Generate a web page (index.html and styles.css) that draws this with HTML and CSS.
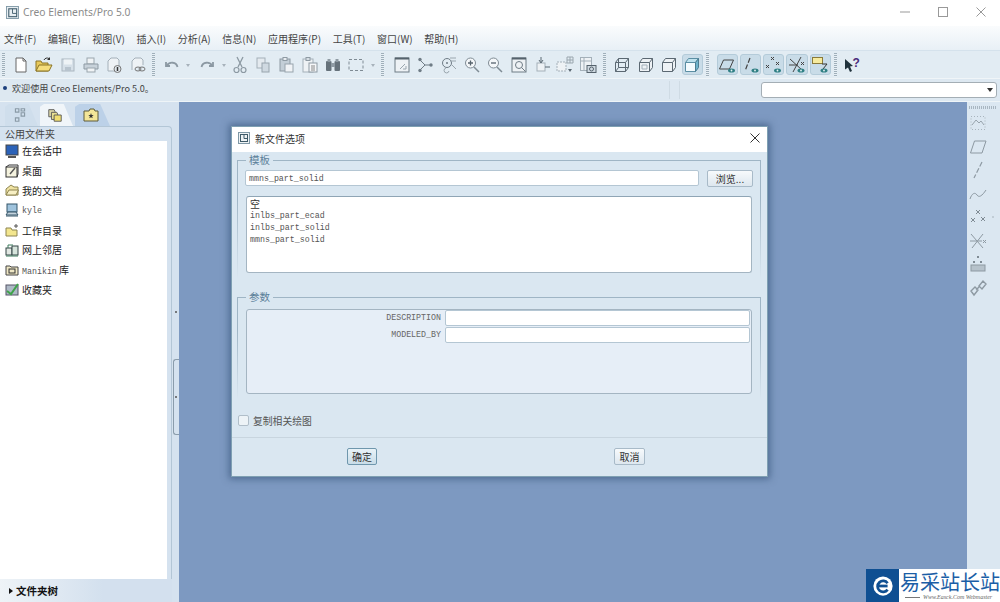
FILE: index.html
```html
<!DOCTYPE html>
<html lang="zh-CN">
<head>
<meta charset="utf-8">
<title>Creo Elements/Pro 5.0</title>
<link rel="stylesheet" href="styles.css">
</head>
<body>
<div class="app">
  <header class="titlebar">
    <svg class="app-icon" viewBox="0 0 14 14"><rect x=".5" y=".5" width="13" height="13" fill="#e8eef2" stroke="#7f98a6"/><rect x="3" y="3" width="8.5" height="8.5" fill="none" stroke="#44606f" stroke-width="1.2"/><path d="M7 3v5h4.500" fill="none" stroke="#44606f"/></svg>
    <span class="app-title">Creo Elements/Pro 5.0</span>
    <div class="win-controls">
      <svg viewBox="0 0 10 10"><path d="M0 5h10" stroke="#999" fill="none"/></svg>
      <svg viewBox="0 0 10 10"><rect x=".5" y=".5" width="9" height="9" stroke="#999" fill="none"/></svg>
      <svg viewBox="0 0 10 10"><path d="M.5.500l9 9M9.500.500l-9 9" stroke="#999" fill="none"/></svg>
    </div>
  </header>

  <nav class="menubar">
    <span>文件(F)</span><span>编辑(E)</span><span>视图(V)</span><span>插入(I)</span><span>分析(A)</span><span>信息(N)</span><span>应用程序(P)</span><span>工具(T)</span><span>窗口(W)</span><span>帮助(H)</span>
  </nav>

  <div class="toolbar">
    <i class="grip grip-first"></i>
    <b class="tb"><svg viewBox="0 0 18 18"><path d="M4 2h7l3 3v11H4z" fill="#fff" stroke="#666"/><path d="M11 2v3h3" fill="none" stroke="#666"/></svg></b>
    <b class="tb"><svg viewBox="0 0 18 18"><path d="M1 15V5h5l1 2h6v8z" fill="#e8c95a" stroke="#8a7426"/><path d="M1 15l3-6h13l-3 6z" fill="#f5dd7c" stroke="#8a7426"/><path d="M9 4c1-2 3-2.500 5-1.500" fill="none" stroke="#333"/><path d="M15 1v3h-3z" fill="#333"/></svg></b>
    <b class="tb"><svg viewBox="0 0 18 18"><rect x="3" y="3" width="12" height="12" fill="#d6e0e8" stroke="#aab6c0"/><rect x="5" y="3.500" width="8" height="5" fill="#eef3f6"/><rect x="6" y="11" width="6" height="4" fill="#b8c4ce"/></svg></b>
    <b class="tb"><svg viewBox="0 0 18 18"><rect x="5" y="2" width="7" height="6" fill="#f0f3f5" stroke="#9aa6ae"/><path d="M2 8h14v5H2z" fill="#c8d2da" stroke="#8e9aa3"/><rect x="5" y="12" width="8" height="4" fill="#f0f3f5" stroke="#9aa6ae"/></svg></b>
    <b class="tb"><svg viewBox="0 0 18 18"><path d="M3 15V5l3-3h6l2 2v11z" fill="#eef2f5" stroke="#a4b0b9"/><circle cx="12.500" cy="13" r="3.500" fill="#dfe6eb" stroke="#777"/><path d="M12.500 11v4" stroke="#333" stroke-width="1.500"/></svg></b>
    <b class="tb"><svg viewBox="0 0 18 18"><path d="M3 14V5l3-3h6l2 2v5" fill="#eef2f5" stroke="#a4b0b9"/><ellipse cx="9" cy="13" rx="3" ry="2" fill="none" stroke="#777"/><ellipse cx="13" cy="13" rx="3" ry="2" fill="none" stroke="#777"/></svg></b>
    <i class="grip grip-a"></i>
    <b class="tb"><svg viewBox="0 0 18 18"><path d="M3 6v4h4" fill="none" stroke="#8c99a3" stroke-width="1.800"/><path d="M3.500 10c3-5 10-4 11 1" fill="none" stroke="#8c99a3" stroke-width="1.800"/></svg></b>
    <b class="dd"></b>
    <b class="tb"><svg viewBox="0 0 18 18"><path d="M15 6v4h-4" fill="none" stroke="#8c99a3" stroke-width="1.800"/><path d="M14.500 10c-3-5-10-4-11 1" fill="none" stroke="#8c99a3" stroke-width="1.800"/></svg></b>
    <b class="dd dd-narrow"></b>
    <b class="tb"><svg viewBox="0 0 18 18"><path d="M6 1l5 10M12 1L7 11" stroke="#8c99a3" stroke-width="1.300" fill="none"/><circle cx="5.500" cy="14" r="2.500" fill="none" stroke="#8c99a3" stroke-width="1.200"/><circle cx="12.500" cy="14" r="2.500" fill="none" stroke="#8c99a3" stroke-width="1.200"/></svg></b>
    <b class="tb"><svg viewBox="0 0 18 18"><rect x="3" y="2" width="8" height="10" fill="#e4eaef" stroke="#a4b0b9"/><rect x="8" y="7" width="7" height="9" fill="#cfd9e1" stroke="#98a4ad"/></svg></b>
    <b class="tb"><svg viewBox="0 0 18 18"><rect x="3" y="3" width="10" height="12" fill="#c3ced7" stroke="#8e9aa3"/><rect x="6" y="1.500" width="4" height="3" fill="#e8edf1" stroke="#8e9aa3"/><rect x="8" y="8" width="8" height="8" fill="#f0f3f6" stroke="#98a4ad"/></svg></b>
    <b class="tb"><svg viewBox="0 0 18 18"><rect x="2" y="3" width="10" height="13" fill="#eef2f5" stroke="#a4b0b9"/><rect x="5" y="1.500" width="4" height="3" fill="#d6dee4" stroke="#8e9aa3"/><rect x="8" y="7" width="8" height="9" fill="#f5f7f9" stroke="#8e9aa3"/><path d="M10 10h4M10 12h4M10 14h4" stroke="#888"/></svg></b>
    <b class="tb"><svg viewBox="0 0 18 18"><rect x="2" y="5" width="5.500" height="10" rx="1" fill="#66727b"/><rect x="10.500" y="5" width="5.500" height="10" rx="1" fill="#66727b"/><rect x="7" y="7" width="4" height="4" fill="#8f9ba4"/><rect x="3.500" y="3" width="3" height="3" fill="#8f9ba4"/><rect x="11.500" y="3" width="3" height="3" fill="#8f9ba4"/></svg></b>
    <b class="tb"><svg viewBox="0 0 18 18"><rect x="2" y="3.500" width="14" height="11" fill="none" stroke="#7f8b94" stroke-dasharray="3 2"/></svg></b>
    <b class="dd"></b>
    <i class="grip grip-b"></i>
    <b class="tb"><svg viewBox="0 0 18 18"><rect x="2" y="2" width="14" height="14" fill="#eef2f5" stroke="#6f7c86"/><path d="M2 2.500h14" stroke="#55626c" stroke-width="2"/><path d="M7 13l5-5M10 13h3v-3" fill="none" stroke="#9aa6ae"/></svg></b>
    <b class="tb"><svg viewBox="0 0 18 18"><path d="M4 4l5 5H16M9 9l-5 5" fill="none" stroke="#6f7c86"/><circle cx="4" cy="3.500" r="1.700" fill="#6f7c86"/><circle cx="4" cy="14.500" r="1.700" fill="#6f7c86"/><circle cx="15" cy="9" r="1.700" fill="#6f7c86"/></svg></b>
    <b class="tb"><svg viewBox="0 0 18 18"><circle cx="7" cy="7" r="4.500" fill="none" stroke="#6f7c86"/><circle cx="7" cy="7" r="1" fill="#6f7c86"/><path d="M10 2h6M10 5h6M12 9l4 4M6 12a2.500 2.500 0 1 0 3 3" fill="none" stroke="#9aa6ae"/></svg></b>
    <b class="tb"><svg viewBox="0 0 18 18"><circle cx="7.500" cy="7" r="5" fill="#f4f7f9" stroke="#7f8b94"/><path d="M5 7h5M7.500 4.500v5" stroke="#55626c" stroke-width="1.300"/><path d="M11 11l5 5" stroke="#7f8b94" stroke-width="1.500"/></svg></b>
    <b class="tb"><svg viewBox="0 0 18 18"><circle cx="7.500" cy="7" r="5" fill="#f4f7f9" stroke="#7f8b94"/><path d="M5 7h5" stroke="#55626c" stroke-width="1.300"/><path d="M11 11l5 5" stroke="#7f8b94" stroke-width="1.500"/></svg></b>
    <b class="tb"><svg viewBox="0 0 18 18"><rect x="2" y="2" width="14" height="14" fill="#eef2f5" stroke="#6f7c86"/><path d="M2 2.500h14" stroke="#55626c" stroke-width="2"/><circle cx="9" cy="9" r="3.500" fill="none" stroke="#6f7c86"/><path d="M11.500 11.500l4 4" stroke="#6f7c86"/></svg></b>
    <b class="tb"><svg viewBox="0 0 18 18"><rect x="4" y="7" width="8" height="8" fill="#eef2f5" stroke="#a4b0b9"/><path d="M8 1v5M6 4l2 3 2-3M12 11h5" stroke="#5b6872" fill="none"/></svg></b>
    <b class="tb"><svg viewBox="0 0 18 18"><rect x="1" y="6" width="9" height="9" fill="#eef2f5" stroke="#a4b0b9" stroke-dasharray="2 1"/><path d="M11 1h6v6h-6zM14 1v6M11 4h6" fill="none" stroke="#9aa6ae"/><path d="M12 13l2 3 2-3z" fill="#5b6872"/></svg></b>
    <b class="tb"><svg viewBox="0 0 18 18"><rect x="1.500" y="1.500" width="11" height="13" fill="#eef2f5" stroke="#a4b0b9"/><path d="M1.500 5h11M5 1.500V14" stroke="#a4b0b9"/><rect x="8" y="9.500" width="9" height="7" fill="#cfd9e1" stroke="#55626c"/><circle cx="12.500" cy="13" r="2" fill="none" stroke="#55626c"/></svg></b>
    <i class="grip grip-c"></i>
    <b class="tb"><svg viewBox="0 0 18 18"><path d="M2.500 6.500h10v9h-10zM2.500 6.500l3-4h10v9l-3 4M12.500 6.500l3-4M5.500 2.500v9h10M5.500 11.500l-3 4" fill="none" stroke="#5b6872"/></svg></b>
    <b class="tb"><svg viewBox="0 0 18 18"><path d="M2.500 6.500h10v9h-10zM2.500 6.500l3-4h10v9l-3 4M12.500 6.500l3-4" fill="#eef2f5" stroke="#5b6872"/><path d="M5 9h5v4H5z" fill="none" stroke="#a4b0b9"/></svg></b>
    <b class="tb"><svg viewBox="0 0 18 18"><path d="M2.500 6.500h10v9h-10zM2.500 6.500l3-4h10v9l-3 4M12.500 6.500l3-4" fill="#eef2f5" stroke="#5b6872"/></svg></b>
    <b class="tb tb-on"><svg viewBox="0 0 18 18"><path d="M2.500 6.500h10v9h-10z" fill="#f4fbfe" stroke="#5b8ea3"/><path d="M2.500 6.500l3-4h10l-3 4z" fill="#bfe2ee" stroke="#5b8ea3"/><path d="M12.500 6.500l3-4v9l-3 4z" fill="#6fb3cb" stroke="#4c7e92"/></svg></b>
    <i class="grip grip-d"></i>
    <b class="tb tb-on"><svg viewBox="0 0 18 18"><path d="M1.500 13l4-9h10l-4 9z" fill="none" stroke="#444"/><ellipse cx="13.500" cy="14.500" rx="3.500" ry="2" fill="#2f7f84"/><circle cx="13.500" cy="14.500" r=".9" fill="#e6f2f4"/></svg></b>
    <b class="tb tb-on"><svg viewBox="0 0 18 18"><path d="M8 2L3 15" fill="none" stroke="#444" stroke-width="1.200" stroke-dasharray="5 2"/><ellipse cx="13" cy="14.500" rx="3.500" ry="2" fill="#2f7f84"/><circle cx="13" cy="14.500" r=".9" fill="#e6f2f4"/></svg></b>
    <b class="tb tb-on"><svg viewBox="0 0 18 18"><path d="M6 1l3 3M9 1L6 4M11 6l3 3M14 6l-3 3M1 9l3 3M4 9l-3 3" fill="none" stroke="#444"/><ellipse cx="12.500" cy="14.500" rx="3.500" ry="2" fill="#2f7f84"/><circle cx="12.500" cy="14.500" r=".9" fill="#e6f2f4"/></svg></b>
    <b class="tb tb-on"><svg viewBox="0 0 18 18"><path d="M2 3l12 11M13 1L5 16M1 9h9" fill="none" stroke="#444"/><path d="M13 6l3 3M16 6l-3 3" stroke="#444"/><ellipse cx="13" cy="14.500" rx="3.500" ry="2" fill="#2f7f84"/><circle cx="13" cy="14.500" r=".9" fill="#e6f2f4"/></svg></b>
    <b class="tb tb-on"><svg viewBox="0 0 18 18"><rect x="1.500" y="1.500" width="10" height="6" fill="#f6eb9e" stroke="#8a7a3a"/><path d="M11 8h5l-4 5" fill="none" stroke="#333"/><ellipse cx="13" cy="14.500" rx="3.500" ry="2" fill="#2f7f84"/><circle cx="13" cy="14.500" r=".9" fill="#e6f2f4"/></svg></b>
    <i class="grip grip-e"></i>
    <b class="tb"><svg viewBox="0 0 18 18"><path d="M1 3l8 7-3 .5L8 15l-2 1-2-4.500-3 2z" fill="#20323c"/><text class="help-mark" x="8.500" y="11">?</text></svg></b>
  </div>

  <div class="statusbar">
    <i class="status-dot"></i>
    <span class="status-text">欢迎使用 Creo Elements/Pro 5.0。</span>
    <i class="status-rule status-rule-a"></i>
    <i class="status-rule"></i>
    <div class="combo"><i class="combo-arrow"></i></div>
  </div>

  <main class="workspace">
    <aside class="sidebar">
      <div class="side-main">
        <div class="tabs">
          <div class="tab tab-a"><svg viewBox="0 0 12 14"><path d="M2 1.500h3v3H2zM7 5h3v3H7zM2 9.500h3v3H2zM7 1.500h3v2H7z" fill="none" stroke="#8a9aa6"/></svg></div>
          <div class="tab tab-b"><svg viewBox="0 0 18 18"><path d="M2 3h6l1 2v6H2z" fill="#ddd8a8" stroke="#555"/><path d="M5 6h6l1 2v6H5z" fill="#e8df90" stroke="#555"/><path d="M8 9h8v7H8z" fill="#f0de70" stroke="#555"/></svg></div>
          <div class="tab tab-c"><svg viewBox="0 0 16 14"><path d="M1 3h5l1-2h4l1 2h3v10H1z" fill="#f3e698" stroke="#5d5a3a"/><path d="M8 5l.7 2 2 .1-1.600 1.200.6 2L8 9.200l-1.700 1.100.6-2L5.300 7.100l2-.1z" fill="#333"/></svg></div>
        </div>
        <section class="panel">
          <h2 class="panel-head">公用文件夹</h2>
          <ul class="folders">
            <li><svg viewBox="0 0 14 14"><rect x="1" y="1" width="12" height="10" fill="#2b62b8" stroke="#444"/><path d="M3 13h8" stroke="#555" stroke-width="2"/></svg>在会话中</li>
            <li><svg viewBox="0 0 14 14"><rect x="1" y="3" width="11" height="10" fill="#f5f3df" stroke="#333"/><path d="M1 3l3-2h9v9l-1 3" fill="none" stroke="#333"/><path d="M5 10l5-6" stroke="#555" stroke-width="1.400"/></svg>桌面</li>
            <li><svg viewBox="0 0 14 14"><path d="M1 12V6l5-4 3 2h4v8z" fill="#efe2a2" stroke="#8d8450"/><path d="M1 12l3-5h9.500L11 12z" fill="#f7efc4" stroke="#8d8450"/></svg>我的文档</li>
            <li><svg viewBox="0 0 14 14"><rect x="2" y="1" width="10" height="8" fill="#9fc3dd" stroke="#35566b"/><path d="M1 12l2-3h8l2 3z" fill="#c4d3dd" stroke="#35566b"/><path d="M1 13h12" stroke="#35566b"/></svg><span class="mono">kyle</span></li>
            <li><svg viewBox="0 0 14 14"><path d="M1 13V5h5l1 2h5v6z" fill="#f3e68e" stroke="#8d8450"/><path d="M11 1v4M9 3h4" stroke="#555"/></svg>工作目录</li>
            <li><svg viewBox="0 0 14 14"><rect x="1" y="5" width="6" height="7" fill="#e2e8e3" stroke="#344"/><rect x="7" y="3" width="6" height="9" fill="#d6e4dc" stroke="#344"/><path d="M3 5V2h5M1 13h12" fill="none" stroke="#3c7a5d"/></svg>网上邻居</li>
            <li><svg viewBox="0 0 14 14"><path d="M1 12V3h4l1 1h7v8z" fill="#efe7c5" stroke="#444"/><rect x="4" y="6" width="6" height="4" fill="none" stroke="#333"/></svg><span><span class="mono">Manikin</span> 库</span></li>
            <li><svg viewBox="0 0 14 14"><rect x="1" y="3" width="12" height="10" fill="#aeb9c6" stroke="#556"/><path d="M2 9l4 3 7-10" fill="none" stroke="#3fa34a" stroke-width="2"/></svg>收藏夹</li>
          </ul>
        </section>
        <footer class="side-foot"><i class="foot-arrow"></i><strong>文件夹树</strong></footer>
      </div>
      <div class="splitter"><i class="split-dot split-dot-top"></i><div class="split-handle"><i class="split-dot"></i></div></div>
    </aside>

    <div class="canvas">
      <section class="dialog">
        <header class="dlg-title">
          <svg class="dlg-icon" viewBox="0 0 12 12"><rect x=".5" y=".5" width="11" height="11" fill="#eef2f4" stroke="#7f98a6"/><rect x="2.500" y="2.500" width="7" height="7" fill="none" stroke="#3e5a68"/><path d="M6 2.500v4h3.500" fill="none" stroke="#3e5a68"/></svg>
          <span class="dlg-name">新文件选项</span>
          <svg class="dlg-close" viewBox="0 0 10 10"><path d="M.5.500l9 9M9.500.500l-9 9" stroke="#333" fill="none"/></svg>
        </header>
        <div class="dlg-body">
          <fieldset class="group">
            <legend>模板</legend>
            <div class="file-row">
              <div class="field file-field mono">mmns_part_solid</div>
              <button class="btn btn-browse" type="button">浏览...</button>
            </div>
            <div class="listbox">
              <div class="cjk-item">空</div>
              <div class="mono">inlbs_part_ecad</div>
              <div class="mono">inlbs_part_solid</div>
              <div class="mono">mmns_part_solid</div>
            </div>
          </fieldset>
          <fieldset class="group group-params">
            <legend>参数</legend>
            <div class="params">
              <label class="mono">DESCRIPTION</label><div class="field"></div>
              <label class="mono">MODELED_BY</label><div class="field"></div>
            </div>
          </fieldset>
          <div class="copy-row"><i class="check"></i><span>复制相关绘图</span></div>
        </div>
        <footer class="dlg-foot">
          <button class="btn btn-ok" type="button">确定</button>
          <button class="btn btn-cancel" type="button">取消</button>
        </footer>
      </section>
      <aside class="watermark">
        <div class="wm-logo"><svg viewBox="0 0 24 24"><circle cx="12" cy="12" r="10.500" fill="#fff"/><path d="M17 9a6 6 0 1 0 0 7" fill="none" stroke="#0f4f92" stroke-width="3"/><path d="M6 12h11" stroke="#0f4f92" stroke-width="3"/></svg></div>
        <div class="wm-text"><div class="wm-name">易采站长站</div><div class="wm-sub"><i class="wm-rule"></i>Www.Easck.Com Webmaster</div></div>
      </aside>
    </div>

    <aside class="rightbar">
      <i class="right-grip"></i>
      <svg viewBox="0 0 18 18"><path d="M2 2.500h14v13H2z" fill="none" stroke="#a8b4bd" stroke-dasharray="1 2"/><path d="M3 11l4-5 3 3 2-2 3 4" fill="none" stroke="#98a4ad"/></svg>
      <svg viewBox="0 0 18 18"><path d="M1.500 15l4-12H17l-4 12z" fill="none" stroke="#8d99a2"/></svg>
      <svg viewBox="0 0 18 18"><path d="M13 1L5 17" fill="none" stroke="#8d99a2" stroke-width="1.200" stroke-dasharray="5 2"/></svg>
      <svg viewBox="0 0 18 18"><path d="M1 14c2-6 5-7 7-4s5 1 9-5" fill="none" stroke="#8d99a2"/></svg>
      <svg class="right-wide" viewBox="0 0 27 18"><path d="M7 2l4 4M11 2L7 6M2 10l4 4M6 10l-4 4M12 9l4 4M16 9l-4 4" stroke="#7f8b94" fill="none"/><circle cx="24" cy="9" r="1" fill="#b8c4cd"/></svg>
      <svg viewBox="0 0 18 18"><path d="M2 2l12 14M14 2L3 16M1 9h12M14 8l3 3M17 8l-3 3" stroke="#8d99a2" fill="none"/></svg>
      <svg viewBox="0 0 18 18"><path d="M8 1l2 2M10 1L8 3M4 6l2 2M6 6L4 8M11 6l2 2M13 6l-2 2" stroke="#7f8b94" fill="none"/><rect x="2" y="10" width="14" height="6" fill="#b6c2cb" stroke="#8d99a2"/></svg>
      <svg viewBox="0 0 18 18"><path d="M2 12l4-4 3 3-4 5zM10 7l4-5 3 3-4 5zM7 11l4-4" fill="none" stroke="#8d99a2" stroke-width="1.400"/></svg>
    </aside>
  </main>
</div>
</body>
</html>
```
FILE: styles.css
```css
* { box-sizing: border-box; }
html, body { margin: 0; padding: 0; }
body { font-family: "Noto Sans CJK SC", "Noto Sans", sans-serif; color: #333; background: #7d99c1; }
i, b { display: block; font-style: normal; font-weight: normal; }
.mono { font-family: "Liberation Mono", "Noto Sans CJK SC", monospace; }
.app { width: 1000px; height: 602px; display: flex; flex-direction: column; overflow: hidden; }

.titlebar { height: 26px; background: #fff; display: flex; align-items: center; padding: 0 0 2px 6px; }
.app-icon { width: 13px; height: 13px; }
.app-title { margin-left: 4px; font-family: "Noto Sans", sans-serif; font-size: 10.3px; color: #8b8b8b; white-space: nowrap; }
.win-controls { margin-left: auto; display: flex; gap: 28px; padding-right: 14px; }
.win-controls svg { width: 10px; height: 10px; }

.menubar { height: 24px; display: flex; gap: 11.67px; align-items: center; padding-left: 4px; font-size: 10px; color: #444; background: linear-gradient(#fafcfd, #e8f0f6); }
.menubar span { white-space: nowrap; }

.toolbar { height: 29px; display: flex; align-items: center; padding-left: 2px; background: #e2ecf3; border-top: 1px solid #d5e2ec; border-bottom: 1px solid #f0f5f8; }
.tb { flex: none; width: 23.3px; height: 24px; display: flex; align-items: center; justify-content: center; }
.tb svg { width: 18px; height: 18px; }
.tb-on { width: 21.3px; height: 21px; margin: 0 1px; background: #c9dce8; border: 1px solid #b4cbd9; border-radius: 3px; }
.dd { flex: none; width: 12px; height: 24px; position: relative; }
.dd::after { content: ""; position: absolute; left: 3px; top: 11px; border: 2px solid transparent; border-top: 3px solid #a7b2bb; border-bottom: 0; }
.dd-narrow { width: 9.4px; }
.grip { flex: none; width: 3px; height: 24px; background: repeating-linear-gradient(#9fafba 0 1px, #e8f0f5 1px 2px); }
.grip-first { margin-right: 4.4px; }
.grip-a { margin: 0 5.5px 0 2.5px; }
.grip-b { margin: 0 6px 0 1.500px; }
.grip-c { margin: 0 5px 0 2.500px; }
.grip-d { margin: 0 6.800px 0 2px; }
.grip-e { margin: 0 4.400px 0 2px; }
.help-mark { font: 700 12px "Liberation Sans", sans-serif; fill: #4a2a7a; }

.statusbar { height: 23px; display: flex; align-items: center; padding: 0 0 4px 3px; background: #dde8f1; border-bottom: 1px solid #eef4f7; }
.status-dot { width: 4px; height: 4px; border-radius: 50%; background: #1c3f7d; }
.status-text { margin-left: 5px; font-size: 9.1px; color: #444; white-space: nowrap; }
.status-rule { width: 1px; height: 18px; margin-left: 9px; margin-top: 4px; background: #cfdbe4; }
.status-rule-a { margin-left: 515px; }
.combo { margin-left: 81px; margin-top: 4px; width: 236px; height: 16px; background: #fff; border: 1px solid #a4aeb5; border-radius: 3px; position: relative; }
.combo-arrow { position: absolute; right: 3px; top: 5px; border: 3px solid transparent; border-top: 4px solid #333; border-bottom: 0; }

.workspace { height: 500px; display: flex; }

.sidebar { width: 179px; flex: none; display: flex; background: #d5e2ef; }
.side-main { width: 172px; display: flex; flex-direction: column; }
.tabs { height: 24px; display: flex; align-items: flex-end; padding-left: 5px; gap: 2px; }
.tab { width: 33px; height: 22px; display: flex; align-items: center; justify-content: center; padding-right: 4px; clip-path: polygon(0 100%, 0 12%, 12% 0, 72% 0, 100% 100%); }
.tab svg { width: 16px; height: 16px; }
.tab-a { background: #cfdeec; }
.tab-b { background: #f0f5f9; }
.tab-c { background: #bcd1e8; width: 35px; }
.panel { flex: 1; min-height: 0; display: flex; flex-direction: column; border-top: 1px solid #b3c6d6; border-right: 1px solid #b3c6d6; border-top-right-radius: 4px; padding-right: 4px; }
.panel-head { margin: 0; height: 14px; line-height: 14px; padding-left: 5px; font-size: 10px; font-weight: 400; color: #444; }
.folders { flex: 1; margin: 0; padding: 0; list-style: none; background: #fff; }
.folders li { height: 19.8px; display: flex; align-items: center; gap: 3px; padding-left: 6px; font-size: 10px; color: #222; white-space: nowrap; }
.folders svg { width: 14px; height: 14px; flex: none; margin-left: -1px; }
.folders .mono { font-size: 8.300px; color: #555; }
.side-foot { height: 23px; display: flex; align-items: center; padding-left: 9px; background: linear-gradient(90deg, #eef3f7, #d3e0ee 60%); font-size: 10.500px; color: #111; }
.foot-arrow { border: 3px solid transparent; border-left: 4px solid #111; border-right: 0; margin-right: 3px; }
.side-foot strong { font-weight: 700; }
.splitter { width: 7px; padding-top: 209px; display: flex; flex-direction: column; align-items: center; }
.split-dot { width: 2px; height: 2px; background: #555; border-radius: 50%; }
.split-handle { margin-top: 46px; width: 6px; height: 76px; border: 1px solid #8a9cab; border-right: 0; border-radius: 3px 0 0 3px; display: flex; align-items: center; justify-content: center; }

.canvas { flex: 1; min-width: 0; position: relative; background: #7d99c1; }
.dialog { position: absolute; left: 52px; top: 24px; width: 537px; height: 351px; display: flex; flex-direction: column; background: #dae7f1; border: 1px solid #7fa0b3; box-shadow: 0 0 7px 2px rgba(40, 70, 105, .55); }
.dlg-title { height: 25px; flex: none; background: #fff; display: flex; align-items: center; padding: 0 7px 3px 6px; }
.dlg-icon { width: 12px; height: 12px; }
.dlg-name { margin-left: 5px; font-size: 10px; color: #333; }
.dlg-close { margin-left: auto; width: 10px; height: 10px; }
.dlg-body { flex: none; padding-top: 1px; }
.group { margin: 0 6px 0 5px; padding: 3px 7px 12px; min-width: 0; border: 1px solid #9fb5c5; border-image: linear-gradient(#9fb5c5 30%, #dae7f1 95%) 1; }
.group legend { margin-left: 1px; padding: 0 3px; height: 14px; line-height: 14px; font-size: 10.500px; color: #5a8099; background: #dae7f1; }
.group-params { margin-top: 4px; padding: 5px 7px 10px; }
.file-row { display: flex; gap: 8px; }
.field { height: 16px; background: #fff; border: 1px solid #b4c6d3; border-radius: 2px; font-size: 8.300px; line-height: 15px; padding-left: 3px; color: #555; }
.file-field { width: 454px; flex: none; }
.btn { font: 10px "Noto Sans CJK SC", sans-serif; color: #333; padding: 0; background: linear-gradient(#f7fafc, #dde7ef); border: 1px solid #a8bac8; border-radius: 2px; height: 17px; line-height: 14px; }
.btn-browse { width: 46px; flex: none; }
.listbox { margin: 9px 1px 0; height: 77px; background: #fff; border: 1px solid #a4b5c2; border-top-color: #8fa5b5; border-radius: 3px; padding: 1px 3px; font-size: 8.300px; line-height: 12px; color: #555; }
.cjk-item { font-size: 10px; color: #333; }
.params { margin: 0 1px; height: 85px; display: grid; grid-template-columns: 1fr 305px; grid-auto-rows: 16px; gap: 1px 4px; align-content: start; background: #e6eef7; border: 1px solid #a4b5c2; border-radius: 3px; padding-right: 1px; }
.params label { text-align: right; font-size: 8.300px; line-height: 16px; color: #666; }
.copy-row { margin-top: 10px; padding-left: 6px; height: 11px; display: flex; align-items: center; gap: 4px; font-size: 9.800px; color: #555; }
.check { width: 11px; height: 11px; border: 1px solid #b0bec9; border-radius: 2px; background: #edf3f7; }
.dlg-foot { flex: 1; margin-top: 11px; border-top: 1px solid #c8d5df; display: flex; gap: 237px; padding: 10px 0 0 115px; }
.btn-ok { width: 30px; border-color: #6f97ad; background: linear-gradient(#e9f3f8, #c8dce8); }
.btn-cancel { width: 31px; }

.watermark { position: absolute; right: -33px; bottom: 0; width: 134px; height: 33px; display: flex; background: #fff; z-index: 2; }
.wm-logo { width: 33px; height: 33px; flex: none; background: #0f4f92; display: flex; align-items: center; justify-content: center; }
.wm-logo svg { width: 22px; height: 22px; }
.wm-text { padding-left: 1px; min-width: 0; }
.wm-name { font-size: 20px; line-height: 25px; color: #1b5ea6; white-space: nowrap; }
.wm-sub { display: flex; align-items: center; gap: 3px; padding-left: 5px; font: italic 6px/7px "Liberation Serif", serif; color: #666; white-space: nowrap; }
.wm-rule { width: 15px; height: 1px; background: #777; flex: none; }

.rightbar { width: 33px; flex: none; display: flex; flex-direction: column; align-items: flex-start; padding: 4px 0 0 2px; background: #dbe7f1; }
.right-grip { width: 27px; height: 3px; margin-bottom: 5px; background: repeating-linear-gradient(90deg, #a8b6c1 0 1px, #dbe7f1 1px 2px); }
.rightbar svg { width: 18px; height: 18px; margin-bottom: 5.500px; flex: none; }
.rightbar .right-wide { width: 27px; }
```
